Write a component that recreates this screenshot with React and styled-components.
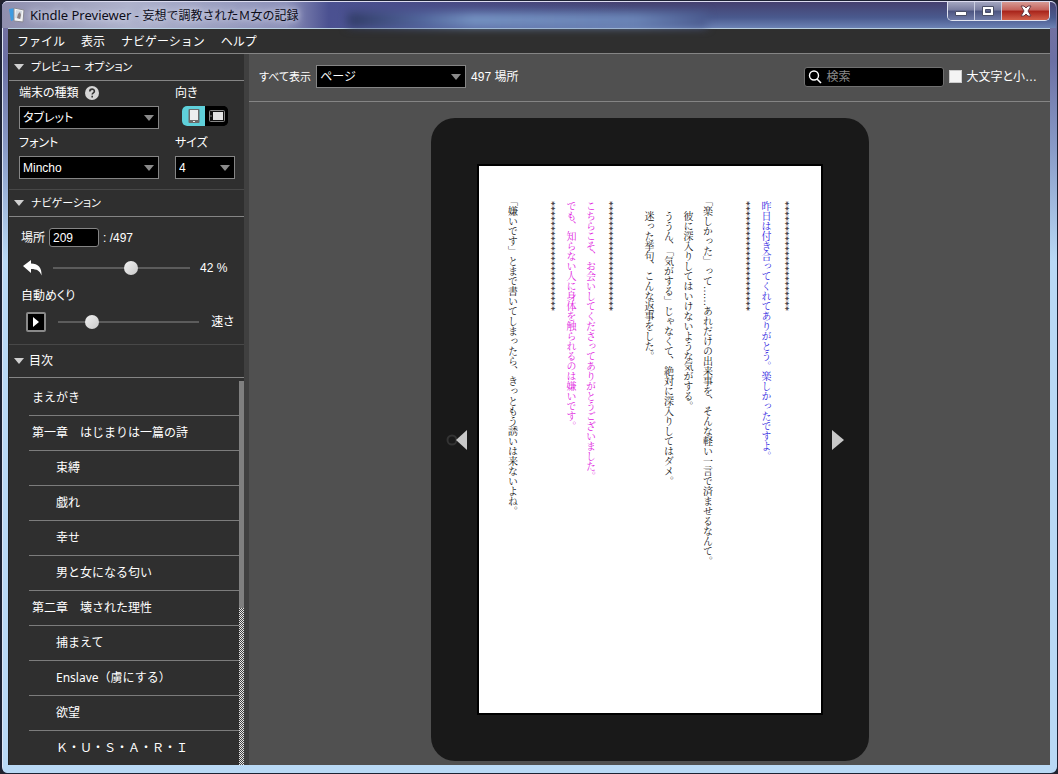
import React, { useState } from "react";
import styled, { createGlobalStyle, css } from "styled-components";

const toc = [
  { title: "まえがき" },
  { title: "第一章　はじまりは一篇の詩" },
  { title: "束縛", child: true },
  { title: "戯れ", child: true },
  { title: "幸せ", child: true },
  { title: "男と女になる匂い", child: true },
  { title: "第二章　壊された理性" },
  { title: "捕まえて", child: true },
  { title: "Enslave（虜にする）", child: true },
  { title: "欲望", child: true },
  { title: "Ｋ・Ｕ・Ｓ・Ａ・Ｒ・Ｉ", child: true },
];

const stars = "*".repeat(22);

const lines = [
  { text: stars },
  { text: "昨日は付き合ってくれてありがとう。楽しかったですよ。", color: "#2a20e0" },
  { text: stars },
  { text: "" },
  { text: "「楽しかった」って……あれだけの出来事を、そんな軽い一言で済ませるなんて。" },
  { text: "　彼に深入りしてはいけないような気がする。" },
  { text: "　ううん、「気がする」じゃなくて、絶対に深入りしてはダメ。" },
  { text: "　迷った挙句、こんな返事をした。" },
  { text: "" },
  { text: stars },
  { text: "こちらこそ、お会いしてくださってありがとうございました。", color: "#e020e0" },
  { text: "でも、知らない人に身体を触られるのは嫌いです。", color: "#e020e0" },
  { text: stars },
  { text: "" },
  { text: "「嫌いです」とまで書いてしまったら、きっともう誘いは来ないよね。" },
];

function Dropdown({ id, options, value }) {
  return (
    <SelectBox>
      <select id={id} defaultValue={value}>
        {options.map((o) => (
          <option key={o}>{o}</option>
        ))}
      </select>
      <svg width="10" height="6" viewBox="0 0 10 6">
        <path d="M0 0h10L5 6z" fill="#8a8a8a" />
      </svg>
    </SelectBox>
  );
}

function Section({ title, tall, grow, children }) {
  const [open, setOpen] = useState(true);
  return (
    <Panel $grow={grow}>
      <PanelHeader $tall={tall} onClick={() => setOpen(!open)} aria-expanded={open}>
        <svg width="10" height="6" viewBox="0 0 10 6">
          <path d="M0 0h10L5 6z" fill="#d0d0d0" />
        </svg>
        <span>{title}</span>
      </PanelHeader>
      {open && children}
    </Panel>
  );
}

export default function App() {
  const [position, setPosition] = useState(42);
  const [speed, setSpeed] = useState(21);
  const [portrait, setPortrait] = useState(true);

  return (
    <>
      <GlobalStyle />
      <Window lang="ja">
        <TitleBar>
          <svg width="18" height="18" viewBox="0 0 18 18">
            <path d="M1 3l6-1 1 11-5 2z" fill="#3d9be0" />
            <path d="M6 2l10 2-1 12-9-1z" fill="#f4f4f4" stroke="#8a8a94" />
            <path d="M8 4l6 1-1 8-6-1z" fill="#d3dbe2" />
            <path d="M9 12l1-4 2-2 1 3-1 4z" fill="#8a7f80" />
          </svg>
          <h1>
            <span>Kindle Previewer - </span>妄想で調教されたＭ女の記録
          </h1>
          <Backdrop />
          <WindowButtons>
            <WindowButton aria-label="最小化">
              <svg width="12" height="12" viewBox="0 0 12 12">
                <path d="M.5 6.500h11v4H.5z" fill="#fff" stroke="#4a4f66" />
              </svg>
            </WindowButton>
            <WindowButton aria-label="最大化">
              <svg width="12" height="12" viewBox="0 0 12 12">
                <path d="M.5 1.500h11v9H.5zM3.500 4.500v3h5v-3z" fill="#fff" fillRule="evenodd" stroke="#4a4f66" />
              </svg>
            </WindowButton>
            <WindowButton $close aria-label="閉じる">
              <svg width="14" height="12" viewBox="0 0 14 12">
                <path
                  d="M2 1h3l2 2 2-2h3L9 6l3 5H9L7 9l-2 2H2l3-5z"
                  fill="#fff"
                  stroke="#6a3a44"
                />
              </svg>
            </WindowButton>
          </WindowButtons>
        </TitleBar>

        <Client>
          <MenuBar>
            <button>ファイル</button>
            <button>表示</button>
            <button>ナビゲーション</button>
            <button>ヘルプ</button>
          </MenuBar>

          <Body>
            <Sidebar>
              <Section title="プレビュー オプション">
                <Options>
                  <Field>
                    <label htmlFor="device">
                      端末の種類
                      <svg width="14" height="14" viewBox="0 0 14 14">
                        <circle cx="7" cy="7" r="7" fill="#d6d6d6" />
                        <path
                          d="M4.800 5.400c0-3 4.600-3 4.600-.2 0 1.600-2.200 1.600-2.200 3.300M7.200 9.800v1.600"
                          fill="none"
                          stroke="#333"
                          strokeWidth="1.600"
                        />
                      </svg>
                    </label>
                    <Dropdown id="device" value="タブレット" options={["タブレット", "電話", "Kindle E-reader"]} />
                  </Field>
                  <Field>
                    <span>向き</span>
                    <Toggle>
                      <ToggleButton $on={portrait} onClick={() => setPortrait(true)} aria-label="縦">
                        <svg width="12" height="16" viewBox="0 0 12 16">
                          <rect x=".5" y="1" width="11" height="14" rx="1" fill="#6a6a6a" />
                          <path d="M2 2h8v10H2z" fill="#eee" />
                          <path d="M5 13.500h2" stroke="#eee" />
                        </svg>
                      </ToggleButton>
                      <ToggleButton $on={!portrait} onClick={() => setPortrait(false)} aria-label="横">
                        <svg width="16" height="12" viewBox="0 0 16 12">
                          <rect x=".5" y=".5" width="15" height="11" rx="1" fill="#111" stroke="#888" />
                          <path d="M4 2h10v8H4z" fill="#e4e4e4" />
                          <path d="M0 6h3" stroke="#888" />
                        </svg>
                      </ToggleButton>
                    </Toggle>
                  </Field>
                  <Field>
                    <label htmlFor="font">フォント</label>
                    <Dropdown id="font" value="Mincho" options={["Mincho", "Gothic"]} />
                  </Field>
                  <Field>
                    <label htmlFor="size">サイズ</label>
                    <Dropdown id="size" value="4" options={["1", "2", "3", "4", "5", "6"]} />
                  </Field>
                </Options>
              </Section>

              <Section title="ナビゲーション">
                <Navigation>
                  <Row>
                    <label htmlFor="location">場所</label>
                    <LocationInput id="location" defaultValue="209" />
                    <span>: /497</span>
                  </Row>
                  <SliderRow>
                    <IconButton aria-label="戻る">
                      <svg width="20" height="16" viewBox="0 0 20 16">
                        <path
                          d="M0 6L8 0v3.500c7 0 11 4 10.500 12C17 11 14 9 8 9v4z"
                          fill="#fff"
                        />
                      </svg>
                    </IconButton>
                    <Slider
                      aria-label="位置"
                      dir="rtl"
                      value={position}
                      onChange={(e) => setPosition(e.target.value)}
                    />
                    <output>{position} %</output>
                  </SliderRow>
                  <Caption>自動めくり</Caption>
                  <SliderRow $speed>
                    <PlayButton aria-label="再生">
                      <svg width="6" height="10" viewBox="0 0 6 10">
                        <path d="M0 0l6 5-6 5z" fill="#fff" />
                      </svg>
                    </PlayButton>
                    <Slider id="speed" value={speed} onChange={(e) => setSpeed(e.target.value)} />
                    <label htmlFor="speed">速さ</label>
                  </SliderRow>
                </Navigation>
              </Section>

              <Section title="目次" tall grow>
                <TocArea>
                  <TocList>
                    {toc.map((item) => (
                      <TocItem key={item.title} $child={item.child}>
                        <a href="#page">{item.title}</a>
                      </TocItem>
                    ))}
                  </TocList>
                  <ScrollTrack>
                    <ScrollThumb />
                  </ScrollTrack>
                </TocArea>
              </Section>
            </Sidebar>

            <Main>
              <Toolbar>
                <ShowLabel htmlFor="show">すべて表示</ShowLabel>
                <Dropdown id="show" value="ページ" options={["ページ", "画像", "リンク"]} />
                <Count>497 場所</Count>
                <Search>
                  <svg width="14" height="14" viewBox="0 0 14 14" fill="none" stroke="#fff">
                    <circle cx="6" cy="5.500" r="4.500" strokeWidth="1.400" />
                    <path d="M9 9l4 4" strokeWidth="1.600" />
                  </svg>
                  <input placeholder="検索" aria-label="検索" />
                </Search>
                <CaseLabel>
                  <input type="checkbox" />
                  大文字と小…
                </CaseLabel>
              </Toolbar>

              <Stage>
                <Device>
                  <TurnButton aria-label="次のページ">
                    <svg width="22" height="20" viewBox="0 0 22 20">
                      <circle cx="6" cy="10" r="4.500" fill="none" stroke="#333" strokeWidth="2" />
                      <path d="M10 10L21 0v20z" fill="#c8c8c8" />
                    </svg>
                  </TurnButton>
                  <Page id="page">
                    {lines.map((line, i) => (
                      <Line key={i} $color={line.color}>
                        {line.text}
                      </Line>
                    ))}
                  </Page>
                  <TurnButton $right aria-label="前のページ">
                    <svg width="12" height="20" viewBox="0 0 12 20">
                      <path d="M0 0l12 10L0 20z" fill="#c8c8c8" />
                    </svg>
                  </TurnButton>
                </Device>
              </Stage>
            </Main>
          </Body>
        </Client>
      </Window>
    </>
  );
}

const GlobalStyle = createGlobalStyle`
  * {
    box-sizing: border-box;
  }
  body {
    margin: 0;
    background: #23232d;
    color: #fff;
    font: 12px/16px "Liberation Sans", "Noto Sans CJK JP", sans-serif;
    font-feature-settings: "palt";
  }
  button, input, select {
    font: inherit;
    font-feature-settings: inherit;
    color: inherit;
    margin: 0;
    padding: 0;
    border: 0;
    background: none;
  }
  svg {
    display: block;
    flex: none;
  }
`;

const wideText = css`
  font-family: "Noto Sans", "Noto Sans CJK JP", sans-serif;
  font-feature-settings: normal;
`;

const Window = styled.div`
  height: 100vh;
  min-height: 600px;
  display: flex;
  flex-direction: column;
  padding: 0 7px 8px 6px;
  border: 1px solid #1d2233;
  border-left-width: 2px;
  border-radius: 7px;
  background: linear-gradient(#77719f, #6c70a4 60px, #8a9cc8 150px, #b9d9f5 260px, #b9d9f5);
  box-shadow: inset 1px 1px 0 #dfe6f4;
`;

const TitleBar = styled.header`
  display: flex;
  align-items: center;
  height: 27px;
  flex: none;
  margin: 0 -6px;
  padding: 0 6px;
  border-top: 1px solid #dcdcf0;
  border-radius: 6px 6px 0 0;
  background: linear-gradient(90deg, #8f8fae, #aeb2cc 12%, #8c90b8 27%, #4b5191 31%, transparent 60%),
    linear-gradient(#45406f, #4a5a8e 60%, #6c82b4);
  color: #0c0c18;
  h1 {
    ${wideText}
    margin: 0 0 0 4px;
    font-size: 12px;
    font-weight: 400;
    white-space: pre;
    text-shadow: 0 0 6px #d5d8ea, 0 0 8px #d5d8ea;
  }
  h1 span {
    font-size: 13px;
  }
`;

const Backdrop = styled.div`
  flex: 1;
  height: 14px;
  margin: 10px 240px 0 50px;
  background: linear-gradient(90deg, #2f3a63, #51669b 20%, #7795c4 35%, #6c86b8 80%, #4a5a8e);
  filter: blur(5px);
`;

const WindowButtons = styled.div`
  display: flex;
  align-self: flex-start;
  border: 1px solid #dfe3f0;
  border-top: 0;
  border-radius: 0 0 5px 5px;
  overflow: hidden;
`;

const WindowButton = styled.button`
  display: grid;
  place-items: center;
  width: ${(p) => (p.$close ? 47 : 27)}px;
  height: 18px;
  border-right: ${(p) => (p.$close ? 0 : "1px solid #c9cde0")};
  background: ${(p) =>
    p.$close
      ? "linear-gradient(#d79a94, #c4615a 45%, #a8231a 50%, #d2604a)"
      : "linear-gradient(#a3a6c0, #787c9f 45%, #4c5480 50%, #707ca8)"};
`;

const Client = styled.div`
  flex: 1;
  min-height: 0;
  display: flex;
  flex-direction: column;
  border-top: 1px solid #b9cfe0;
  background: #2f2f2f;
`;

const MenuBar = styled.nav`
  ${wideText}
  display: flex;
  flex: none;
  gap: 16px;
  height: 25px;
  padding: 1px 0 0 9px;
  border-bottom: 1px solid #858585;
`;

const Body = styled.div`
  flex: 1;
  min-height: 0;
  display: flex;
`;

const Sidebar = styled.aside`
  width: 241px;
  flex: none;
  display: flex;
  flex-direction: column;
  border-left: 1px solid #222;
  border-right: 5px solid #404040;
`;

const Panel = styled.section`
  display: flex;
  flex-direction: column;
  flex: ${(p) => (p.$grow ? "1" : "none")};
  min-height: 0;
  & + & {
    border-top: 1px solid #484848;
  }
`;

const PanelHeader = styled.button`
  display: flex;
  align-items: center;
  flex: none;
  gap: ${(p) => (p.$tall ? 5 : 7)}px;
  height: ${(p) => (p.$tall ? 33 : 27)}px;
  padding-left: 5px;
  border-bottom: 1px solid #858585;
  font-size: ${(p) => (p.$tall ? 12 : 11)}px;
`;

const Options = styled.div`
  display: grid;
  grid-template-columns: 1fr 60px;
  gap: 6px 16px;
  padding: 4px 9px 10px 10px;
`;

const Field = styled.div`
  display: flex;
  flex-direction: column;
  gap: 5px;
  label {
    display: flex;
    align-items: center;
    gap: 6px;
  }
`;

const SelectBox = styled.div`
  display: grid;
  align-items: center;
  border: 1px solid #858585;
  background: #000;
  select {
    grid-area: 1 / 1;
    appearance: none;
    width: 100%;
    height: 21px;
    padding-left: 3px;
    outline: 0;
  }
  option {
    background: #000;
  }
  svg {
    grid-area: 1 / 1;
    justify-self: end;
    margin-right: 4px;
    pointer-events: none;
  }
`;

const Toggle = styled.div`
  display: flex;
  align-self: center;
  border-radius: 5px;
  overflow: hidden;
  background: #000;
`;

const ToggleButton = styled.button`
  display: grid;
  place-items: center;
  width: 23px;
  height: 20px;
  background: ${(p) => (p.$on ? "#5fd0da" : "#000")};
`;

const Navigation = styled.div`
  display: flex;
  flex-direction: column;
  gap: 8px;
  padding: 11px 10px 11px 12px;
`;

const Row = styled.div`
  display: flex;
  align-items: center;
  gap: 4px;
`;

const LocationInput = styled.input`
  width: 50px;
  height: 19px;
  padding-left: 3px;
  border: 1px solid #858585;
  border-radius: 3px;
  background: #000;
`;

const SliderRow = styled(Row)`
  height: ${(p) => (p.$speed ? 22 : 26)}px;
  padding-left: ${(p) => (p.$speed ? 5 : 2)}px;
  gap: ${(p) => (p.$speed ? 12 : 10)}px;
  output {
    width: 34px;
  }
`;

const IconButton = styled.button`
  display: grid;
  place-items: center;
`;

const PlayButton = styled(IconButton)`
  width: 20px;
  height: 20px;
  border: 2px solid #8a8a8a;
  border-radius: 2px;
  background: #000;
`;

const Caption = styled.div`
  line-height: 14px;
`;

const Slider = styled.input.attrs({ type: "range" })`
  appearance: none;
  flex: 1;
  min-width: 0;
  height: 14px;
  &::-webkit-slider-runnable-track {
    height: 2px;
    background: #5c5c5c;
  }
  &::-webkit-slider-thumb {
    appearance: none;
    width: 14px;
    height: 14px;
    margin-top: -6px;
    border-radius: 50%;
    background: linear-gradient(135deg, #f2f2f2, #c8c8c8);
  }
`;

const TocArea = styled.div`
  ${wideText}
  flex: 1;
  min-height: 0;
  display: flex;
  padding: 3px 0 0 20px;
`;

const TocList = styled.ul`
  flex: 1;
  margin: 0;
  padding: 0;
  list-style: none;
  overflow: hidden;
`;

const TocItem = styled.li`
  height: 35px;
  padding-left: ${(p) => (p.$child ? 27 : 3)}px;
  border-bottom: 1px solid #7c7c7c;
  line-height: 34px;
  a {
    color: inherit;
    text-decoration: none;
  }
`;

const ScrollTrack = styled.div`
  width: 5px;
  background: repeating-conic-gradient(#e8e8e8 0 25%, #404040 0 50%) 0 0 / 2px 2px;
`;

const ScrollThumb = styled.div`
  height: 59%;
  background: #808080;
`;

const Main = styled.main`
  flex: 1;
  min-width: 0;
  display: flex;
  flex-direction: column;
  background: #505050;
`;

const Toolbar = styled.div`
  display: flex;
  align-items: center;
  flex: none;
  gap: 5px;
  height: 48px;
  padding: 0 13px 2px 10px;
  border-bottom: 1px solid #858585;
  white-space: nowrap;
  ${SelectBox} {
    width: 150px;
  }
`;

const ShowLabel = styled.label`
  font-size: 11px;
`;

const Count = styled.span`
  margin-right: auto;
`;

const Search = styled.div`
  display: flex;
  align-items: center;
  gap: 4px;
  width: 140px;
  height: 20px;
  padding-left: 3px;
  border: 1px solid #707070;
  border-radius: 3px;
  background: #000;
  input {
    flex: 1;
    min-width: 0;
    outline: 0;
  }
  input::placeholder {
    color: #8a8a8a;
  }
`;

const CaseLabel = styled.label`
  display: flex;
  align-items: center;
  gap: 4px;
  input {
    appearance: none;
    width: 13px;
    height: 13px;
    background: #f4f4f4;
    border: 1px solid #ccc;
  }
  input:checked {
    background: #5fd0da;
  }
`;

const Stage = styled.div`
  flex: 1;
  min-height: 0;
  display: flex;
  justify-content: center;
  padding: 16px 0 4px;
`;

const Device = styled.div`
  display: flex;
  height: 100%;
  aspect-ratio: 438 / 643;
  padding: 46px 0;
  border-radius: 24px;
  background: #191919;
`;

const TurnButton = styled.button`
  display: flex;
  align-items: center;
  justify-content: ${(p) => (p.$right ? "flex-start" : "flex-end")};
  width: 46px;
  flex: none;
  padding: 0 9px;
`;

const Page = styled.article`
  flex: 1;
  min-width: 0;
  display: flex;
  flex-direction: row-reverse;
  justify-content: space-between;
  padding: 35px 27px 35px 24px;
  border: 2px solid #000;
  background: #fff;
`;

const Line = styled.p`
  margin: 0;
  width: 18px;
  writing-mode: vertical-rl;
  font: 400 10px/18px "Liberation Serif", "Noto Serif CJK JP", "Noto Sans CJK JP", serif;
  font-feature-settings: normal;
  text-spacing-trim: trim-start;
  white-space: nowrap;
  color: ${(p) => p.$color || "#111"};
`;
